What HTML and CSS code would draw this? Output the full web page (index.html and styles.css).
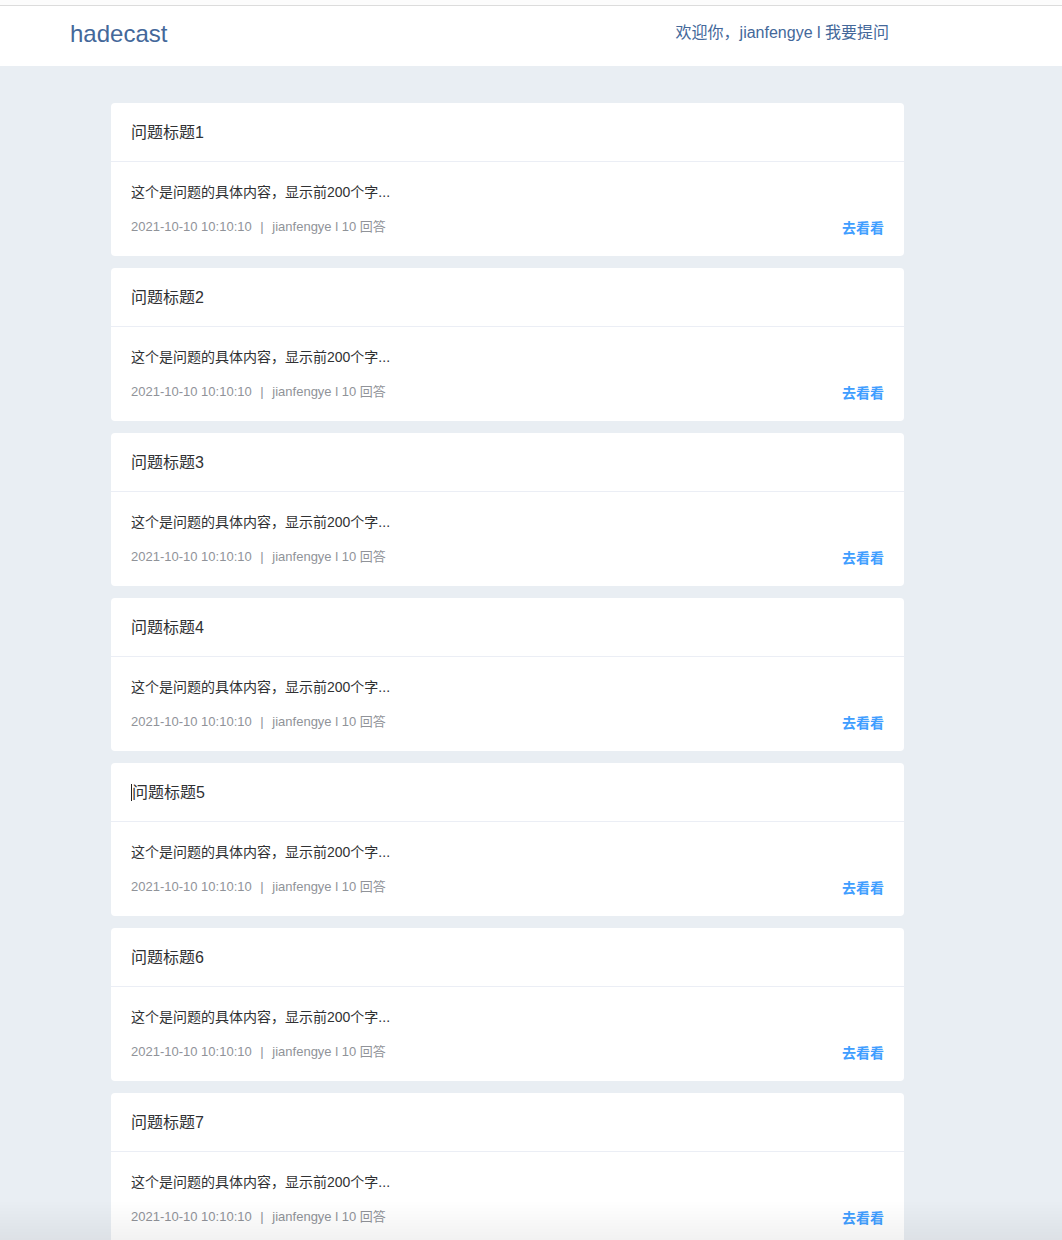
FILE: index.html
```html
<!DOCTYPE html>
<html lang="zh">
<head>
<meta charset="utf-8">
<title>hadecast</title>
<link rel="stylesheet" href="styles.css">
</head>
<body>
<div class="topstrip"></div>
<header class="header">
  <div class="header-inner">
    <a class="logo">hadecast</a>
    <div class="user">欢迎你，jianfengye l 我要提问</div>
  </div>
</header>
<main class="main">
  <div class="list">
    <div class="card">
      <div class="card-header">问题标题1</div>
      <div class="card-body">
        <div class="content">这个是问题的具体内容，显示前200个字...</div>
        <div class="meta-row"><span class="meta">2021-10-10 10:10:10 <span class="sep">|</span> jianfengye l 10 回答</span><a class="go">去看看</a></div>
      </div>
    </div>
    <div class="card">
      <div class="card-header">问题标题2</div>
      <div class="card-body">
        <div class="content">这个是问题的具体内容，显示前200个字...</div>
        <div class="meta-row"><span class="meta">2021-10-10 10:10:10 <span class="sep">|</span> jianfengye l 10 回答</span><a class="go">去看看</a></div>
      </div>
    </div>
    <div class="card">
      <div class="card-header">问题标题3</div>
      <div class="card-body">
        <div class="content">这个是问题的具体内容，显示前200个字...</div>
        <div class="meta-row"><span class="meta">2021-10-10 10:10:10 <span class="sep">|</span> jianfengye l 10 回答</span><a class="go">去看看</a></div>
      </div>
    </div>
    <div class="card">
      <div class="card-header">问题标题4</div>
      <div class="card-body">
        <div class="content">这个是问题的具体内容，显示前200个字...</div>
        <div class="meta-row"><span class="meta">2021-10-10 10:10:10 <span class="sep">|</span> jianfengye l 10 回答</span><a class="go">去看看</a></div>
      </div>
    </div>
    <div class="card">
      <div class="card-header"><span class="caret"></span>问题标题5</div>
      <div class="card-body">
        <div class="content">这个是问题的具体内容，显示前200个字...</div>
        <div class="meta-row"><span class="meta">2021-10-10 10:10:10 <span class="sep">|</span> jianfengye l 10 回答</span><a class="go">去看看</a></div>
      </div>
    </div>
    <div class="card">
      <div class="card-header">问题标题6</div>
      <div class="card-body">
        <div class="content">这个是问题的具体内容，显示前200个字...</div>
        <div class="meta-row"><span class="meta">2021-10-10 10:10:10 <span class="sep">|</span> jianfengye l 10 回答</span><a class="go">去看看</a></div>
      </div>
    </div>
    <div class="card">
      <div class="card-header">问题标题7</div>
      <div class="card-body">
        <div class="content">这个是问题的具体内容，显示前200个字...</div>
        <div class="meta-row"><span class="meta">2021-10-10 10:10:10 <span class="sep">|</span> jianfengye l 10 回答</span><a class="go">去看看</a></div>
      </div>
    </div>
  </div>
</main>
<div class="bottom-fade"></div>
</body>
</html>
```
FILE: styles.css
```css
html, body {
  margin: 0;
  padding: 0;
}
body {
  background: #e9eef3;
  font-family: "Liberation Sans", "Noto Sans CJK SC", sans-serif;
  color: #303133;
}
.topstrip {
  height: 5px;
  background: #fcfcfc;
}
.header {
  background: #fff;
  border-top: 1px solid #dcdcdc;
  height: 60px;
}
.header-inner {
  width: 889px;
  padding-left: 70px;
  box-sizing: border-box;
  height: 54px;
  display: flex;
  align-items: center;
  justify-content: space-between;
}
.logo {
  font-size: 24px;
  color: #44689a;
  padding-top: 1px;
}
.user {
  font-size: 16px;
  color: #44689a;
  margin-bottom: 4px;
}
.main {
  padding: 37px 0 0 111px;
}
.list {
  width: 793px;
  display: flex;
  flex-direction: column;
  gap: 12px;
}
.card {
  background: #fff;
  border-radius: 4px;
  overflow: hidden;
}
.card-header {
  padding: 19px 20px 17px;
  font-size: 16px;
  line-height: 22px;
  border-bottom: 1px solid #ebeef5;
  color: #303133;
}
.caret {
  display: inline-block;
  width: 1px;
  height: 17px;
  background: #222;
  vertical-align: -3px;
}
.card-body {
  padding: 21px 20px 19px;
}
.content {
  font-size: 14px;
  line-height: 18px;
  color: #303133;
}
.meta-row {
  margin-top: 17px;
  display: flex;
  justify-content: space-between;
  align-items: flex-start;
}
.meta {
  font-size: 13px;
  line-height: 18px;
  color: #909399;
}
.sep {
  margin: 0 5px;
}
.go {
  font-size: 14px;
  font-weight: bold;
  color: #409eff;
  line-height: 18px;
  padding-top: 1px;
}
.bottom-fade {
  position: fixed;
  left: 0;
  right: 0;
  bottom: 0;
  height: 40px;
  background: linear-gradient(to bottom, rgba(0,0,0,0), rgba(0,0,0,0.05));
  pointer-events: none;
}
```
